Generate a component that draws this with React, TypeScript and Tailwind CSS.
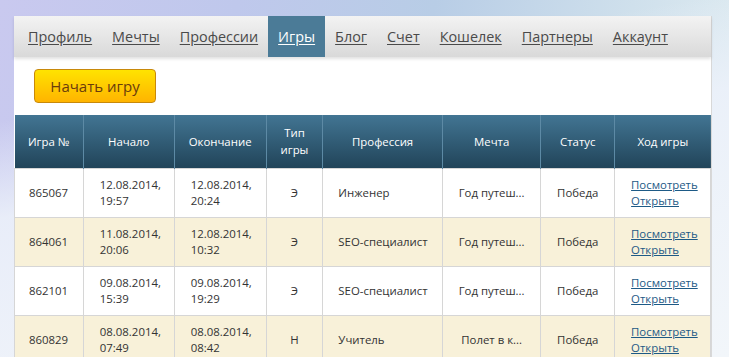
import React from "react";

const nav = ["Профиль", "Мечты", "Профессии", "Игры", "Блог", "Счет", "Кошелек", "Партнеры", "Аккаунт"];

const rows = [
  { id: "865067", s: ["12.08.2014,", "19:57"], e: ["12.08.2014,", "20:24"], t: "Э", p: "Инженер", d: "Год путеш...", st: "Победа" },
  { id: "864061", s: ["11.08.2014,", "20:06"], e: ["12.08.2014,", "10:32"], t: "Э", p: "SEO-специалист", d: "Год путеш...", st: "Победа" },
  { id: "862101", s: ["09.08.2014,", "15:39"], e: ["09.08.2014,", "19:29"], t: "Э", p: "SEO-специалист", d: "Год путеш...", st: "Победа" },
  { id: "860829", s: ["08.08.2014,", "07:49"], e: ["08.08.2014,", "08:42"], t: "Н", p: "Учитель", d: "Полет в к...", st: "Победа" },
];

export default function App() {
  return (
    <div
      className="w-[729px] h-[357px] overflow-hidden pt-[16px] pl-[14px] bg-[linear-gradient(170deg,rgba(240,244,252,0)_25%,rgba(236,241,250,0.9)_45%,rgba(242,246,250,1)_100%),linear-gradient(100deg,#c9c9ef_0%,#bfc8ec_30%,#b8cde6_55%,#cfe0ec_80%,#e2eef2_100%)]"
      style={{ fontFamily: '"Open Sans", "Noto Sans", sans-serif' }}
    >
      <div className="w-[698px] bg-white border-r border-[#d8d8d8] h-[400px]">
        <div className="h-[41px] flex items-stretch pl-[4px] bg-[linear-gradient(#f3f3f3,#d9d9d9)] shadow-[0_2px_3px_rgba(0,0,0,0.12)] relative">
          {nav.map((n) => (
            <div
              key={n}
              className={`flex items-center px-[10px] text-[14.4px] underline underline-offset-2 ${
                n === "Игры" ? "bg-[#4b7b97] text-white" : "text-[#4a4a4a]"
              }`}
            >
              {n}
            </div>
          ))}
        </div>
        <div className="pt-[12px] pl-[20px] pb-[12px]">
          <button className="w-[122px] h-[34px] rounded-[4px] border border-[#c8890a] bg-[linear-gradient(#ffe300,#ffb400)] text-[15px] text-[#6a3c0c]">
            Начать игру
          </button>
        </div>
        <table className="border-collapse text-[11.4px] text-[#333]">
          <colgroup>
            <col className="w-[69px]" />
            <col className="w-[91px]" />
            <col className="w-[92px]" />
            <col className="w-[57px]" />
            <col className="w-[120px]" />
            <col className="w-[99px]" />
            <col className="w-[74px]" />
            <col className="w-[96px]" />
          </colgroup>
          <thead>
            <tr className="h-[53px] bg-[linear-gradient(#427593,#214459)] text-white">
              {["Игра №", "Начало", "Окончание", "Тип игры", "Профессия", "Мечта", "Статус", "Ход игры"].map((h, i) => (
                <th key={h} className={`font-normal text-center px-[6px] leading-[17px] ${i > 0 ? "border-l border-[#5d8aa5]" : ""}`}>
                  {h === "Тип игры" ? (
                    <>
                      Тип
                      <br />
                      игры
                    </>
                  ) : (
                    h
                  )}
                </th>
              ))}
            </tr>
          </thead>
          <tbody>
            {rows.map((r, i) => (
              <tr key={r.id} className={`h-[49px] ${i % 2 ? "bg-[#f8f1d9]" : "bg-white"}`}>
                <td className="border border-[#d6d6d6] pl-[14px]">{r.id}</td>
                <td className="border border-[#d6d6d6] pl-[16px] leading-[16px]">
                  {r.s[0]}
                  <br />
                  {r.s[1]}
                </td>
                <td className="border border-[#d6d6d6] pl-[16px] leading-[16px]">
                  {r.e[0]}
                  <br />
                  {r.e[1]}
                </td>
                <td className="border border-[#d6d6d6] text-center">{r.t}</td>
                <td className="border border-[#d6d6d6] pl-[15px]">{r.p}</td>
                <td className="border border-[#d6d6d6] text-center">{r.d}</td>
                <td className="border border-[#d6d6d6] text-center">{r.st}</td>
                <td className="border border-[#d6d6d6] pl-[16px] leading-[16px]">
                  <a className="text-[#1d5a86] underline">Посмотреть</a>
                  <br />
                  <a className="text-[#1d5a86] underline">Открыть</a>
                </td>
              </tr>
            ))}
          </tbody>
        </table>
      </div>
    </div>
  );
}
